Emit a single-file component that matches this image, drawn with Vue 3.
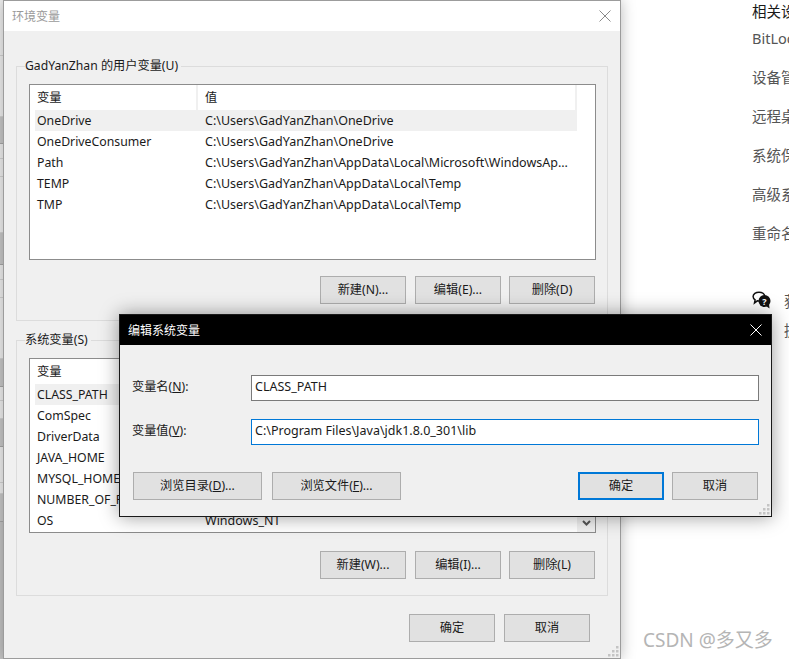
<script setup>
const strip = [
  { h: 56, c: 'plain' }, { h: 61, c: 'plain' }, { h: 27, c: 'btn' }, { h: 15, c: 'plain' }, { h: 18, c: 'plain' },
  { h: 56, c: 'plain' }, { h: 32, c: 'btn' }, { h: 15, c: 'plain' }, { h: 18, c: 'plain' }, { h: 61, c: 'plain' },
  { h: 28, c: 'btn' }, { h: 14, c: 'plain' }, { h: 18, c: 'plain' }, { h: 28, c: 'btn' }, { h: 36, c: 'plain' },
  { h: 11, c: 'plain' }, { h: 28, c: 'btn' }, { h: 10, c: 'dark' }, { h: 127, c: 'dark' }
]
const userVars = [
  ['OneDrive', 'C:\\Users\\GadYanZhan\\OneDrive'],
  ['OneDriveConsumer', 'C:\\Users\\GadYanZhan\\OneDrive'],
  ['Path', 'C:\\Users\\GadYanZhan\\AppData\\Local\\Microsoft\\WindowsAp...'],
  ['TEMP', 'C:\\Users\\GadYanZhan\\AppData\\Local\\Temp'],
  ['TMP', 'C:\\Users\\GadYanZhan\\AppData\\Local\\Temp']
]
const sysVars = [
  ['CLASS_PATH', 'C:\\Program Files\\Java\\jdk1.8.0_301\\lib'],
  ['ComSpec', 'C:\\Windows\\system32\\cmd.exe'],
  ['DriverData', 'C:\\Windows\\System32\\Drivers\\DriverData'],
  ['JAVA_HOME', 'C:\\Program Files\\Java\\jdk1.8.0_301'],
  ['MYSQL_HOME', 'C:\\Program Files\\MySQL'],
  ['NUMBER_OF_PROCESSORS', '8'],
  ['OS', 'Windows_NT']
]
const links = ['BitLocker 设置', '设备管理器', '远程桌面', '系统保护', '高级系统设置', '重命名这台电脑']
const grip = [[8, 0], [4, 4], [8, 4], [0, 8], [4, 8], [8, 8]]
</script>

<template>
  <div class="desk">
    <div class="strip">
      <div v-for="(s, i) in strip" :key="i" :class="['seg', s.c]" :style="{ height: s.h + 'px' }"></div>
    </div>

    <aside class="side">
      <div class="side-head">相关设置</div>
      <div v-for="l in links" :key="l" class="side-link">{{ l }}</div>
      <div class="help">
        <svg class="help-icon" width="20" height="18" viewBox="0 0 20 18">
          <path d="M7 1.2c3.2 0 5.8 1.9 5.8 4.4S10.200 10 7 10c-.6 0-1.200-.1-1.700-.2L2.500 12l.6-3.200C1.800 8 1.100 6.900 1.100 5.600 1.100 3.100 3.800 1.200 7 1.200z" fill="#fff" stroke="#111" stroke-width="1.500"/>
          <circle cx="12.500" cy="10" r="6" fill="#111"/>
          <path d="M14 15l3.500 2.500-.5-5z" fill="#111"/>
          <text x="12.500" y="13.500" class="help-q">?</text>
        </svg>
        <span>获取帮助</span>
      </div>
      <div class="feedback">提供反馈</div>
    </aside>

    <div class="win main">
      <div class="title">
        <span>环境变量</span>
        <svg class="close" width="12" height="12" viewBox="0 0 12 12"><path d="M.5.5l11 11M11.500.5l-11 11" stroke="#8a8a8a" fill="none"/></svg>
      </div>

      <fieldset class="group first">
        <legend>GadYanZhan 的用户变量(U)</legend>
        <div class="list user">
          <div class="row head"><span class="k">变量</span><span class="v">值</span></div>
          <div v-for="(r, i) in userVars" :key="r[0]" :class="['row', { sel: i === 0 }]">
            <span class="k">{{ r[0] }}</span><span class="v">{{ r[1] }}</span>
          </div>
        </div>
        <div class="btns">
          <button class="b wide lead">新建(N)...</button>
          <button class="b wide">编辑(E)...</button>
          <button class="b wide">删除(D)</button>
        </div>
      </fieldset>

      <fieldset class="group second">
        <legend>系统变量(S)</legend>
        <div class="list sys">
          <div class="row head"><span class="k">变量</span><span class="v">值</span></div>
          <div v-for="(r, i) in sysVars" :key="r[0]" :class="['row', { sel: i === 0 }]">
            <span class="k">{{ r[0] }}</span><span class="v">{{ r[1] }}</span>
          </div>
          <div class="arrow">
            <svg width="9" height="7" viewBox="0 0 9 7"><path d="M1 1l3.500 3.500L8 1" stroke="#555" stroke-width="2" fill="none"/></svg>
          </div>
        </div>
        <div class="btns low">
          <button class="b wide lead">新建(W)...</button>
          <button class="b wide">编辑(I)...</button>
          <button class="b wide">删除(L)</button>
        </div>
      </fieldset>

      <div class="foot">
        <button class="b wide">确定</button>
        <button class="b wide">取消</button>
      </div>
      <svg class="grip" width="11" height="11" viewBox="0 0 11 11"><rect v-for="(g, i) in grip" :key="i" :x="g[0]" :y="g[1]" width="2.500" height="2.500" fill="#c4c4c4"/></svg>
    </div>

    <div class="win dialog">
      <div class="dtitle">
        <span>编辑系统变量</span>
        <svg width="12" height="12" viewBox="0 0 12 12"><path d="M.5.5l11 11M11.500.5l-11 11" stroke="#fff" fill="none"/></svg>
      </div>
      <div class="dbody">
        <div class="field">
          <label>变量名(<u>N</u>):</label>
          <div class="input">CLASS_PATH</div>
        </div>
        <div class="field two">
          <label>变量值(<u>V</u>):</label>
          <div class="input focus">C:\Program Files\Java\jdk1.8.0_301\lib</div>
        </div>
        <div class="dbtns">
          <button class="b browse">浏览目录(<u>D</u>)...</button>
          <button class="b browse">浏览文件(<u>F</u>)...</button>
          <span class="spacer"></span>
          <button class="b act primary">确定</button>
          <button class="b act">取消</button>
        </div>
      </div>
      <svg class="grip" width="11" height="11" viewBox="0 0 11 11"><rect v-for="(g, i) in grip" :key="i" :x="g[0]" :y="g[1]" width="2.500" height="2.500" fill="#c4c4c4"/></svg>
    </div>

    <div class="mark">CSDN @多又多</div>
  </div>
</template>

<style scoped>
.desk {
  position: relative;
  width: 789px;
  height: 659px;
  overflow: hidden;
  background: #fff;
  font-family: "Noto Sans", "Noto Sans CJK SC", sans-serif;
  font-size: 12px;
  color: #1a1a1a;
}
.strip { position: absolute; left: 0; top: 0; width: 4px; }
.seg { border-bottom: 1px solid #d4d4d4; box-sizing: border-box; }
.plain { background: #f0f0f0; }
.btn { background: #c9c9c9; border-bottom-color: #a8a8a8; }
.dark { background: #c4c4c4; border: 0; }

.side { position: absolute; left: 752px; top: 0; width: 120px; color: #555; font-size: 14.500px; }
.side-head { height: 23px; line-height: 23px; color: #1a1a1a; white-space: nowrap; }
.side-link { height: 39px; line-height: 30px; white-space: nowrap; }
.help { display: flex; align-items: center; gap: 12px; margin-top: 31px; height: 24px; white-space: nowrap; }
.help-icon { flex: none; }
.help-q { font-size: 9px; font-weight: 700; fill: #fff; text-anchor: middle; font-family: "Noto Sans", sans-serif; }
.feedback { margin: 7px 0 0 32px; white-space: nowrap; }

.win { position: absolute; box-sizing: border-box; background: #f0f0f0; }
.main {
  left: 3px; top: 0; width: 618px; height: 659px;
  border: 1px solid #9c9c9c;
  box-shadow: 0 0 14px rgba(0, 0, 0, .28);
}
.title {
  height: 30px; background: #fff; display: flex; align-items: center; justify-content: space-between;
  padding: 0 9px 0 8px; color: #9a9a9a; font-size: 12px;
}
.group {
  margin: 0 0 0 12px; width: 592px; box-sizing: border-box; min-width: 0;
  border: 1px solid #dcdcdc; padding: 0 11px 0 12px;
}
.group legend { padding: 0 3px 0 0; margin-left: -4px; line-height: 18px; height: 18px; font-size: 12.200px; }
.first { margin-top: 26px; height: 264px; }
.second { margin-top: 10px; height: 265px; }
.list { position: relative; background: #fff; border: 1px solid #8c8c8c; box-sizing: border-box; width: 567px; padding-left: 5px; overflow: hidden; }
.user { margin-top: 9px; height: 176px; }
.sys { margin-top: 9px; height: 175px; }
.row { display: flex; height: 21px; line-height: 21px; width: 542px; font-size: 12.500px; white-space: nowrap; }
.row.head { height: 25px; line-height: 25px; font-size: 12.200px; }
.row.head .k { border-right: 2px solid #f0f0f0; box-sizing: border-box; }
.row.head .v { border-right: 2px solid #f0f0f0; box-sizing: border-box; }
.row.sel { background: #f0f0f0; }
.k { width: 163px; padding-left: 2px; box-sizing: border-box; flex: none; font-size: 12.300px; }
.v { flex: 1; padding-left: 7px; }
.arrow { position: absolute; right: 0; bottom: 0; width: 18px; height: 17px; background: #f0f0f0; display: flex; align-items: center; justify-content: center; }
.btns { display: flex; justify-content: flex-end; gap: 8px; margin-top: 16px; padding-right: 1px; }
.btns.low { margin-top: 18px; }
.lead { margin-right: 1px; }
.b {
  height: 28px; box-sizing: border-box; padding: 0; background: #e1e1e1; border: 1px solid #adadad;
  font: inherit; color: #1a1a1a; font-size: 12.200px; line-height: 24px;
}
.wide { width: 86px; }
.foot { display: flex; justify-content: flex-end; gap: 9px; margin-top: 18px; padding-right: 30px; }
.grip { position: absolute; right: 1px; bottom: 1px; }

.dialog {
  left: 119px; top: 314px; width: 653px; height: 203px;
  border: 1px solid #1a1a1a;
  box-shadow: 0 0 18px rgba(0, 0, 0, .4);
}
.dtitle {
  height: 30px; background: #000; color: #fff; display: flex; align-items: center; justify-content: space-between;
  padding: 0 9px 0 8px; font-size: 12px;
}
.dbody { padding: 30px 12px 0 12px; }
.field { display: flex; align-items: flex-start; height: 26px; }
.field.two { margin-top: 18px; }
.field label { width: 119px; flex: none; font-size: 12.200px; line-height: 24px; }
.input {
  flex: 1; height: 26px; box-sizing: border-box; background: #fff; border: 1px solid #7a7a7a;
  padding: 0 3px; line-height: 22px; font-size: 12.500px; white-space: nowrap;
}
.input.focus { border-color: #0078d7; }
.dbtns { display: flex; gap: 10px; margin-top: 27px; padding: 0 1px; }
.spacer { flex: 1; }
.browse { width: 129px; }
.act { width: 86px; }
.act.primary { border: 2px solid #0078d7; margin-right: -2px; }

.mark {
  position: absolute; left: 643px; top: 628px; font-size: 19px; line-height: 24px;
  color: #b5b5b5; white-space: nowrap;
}
</style>
